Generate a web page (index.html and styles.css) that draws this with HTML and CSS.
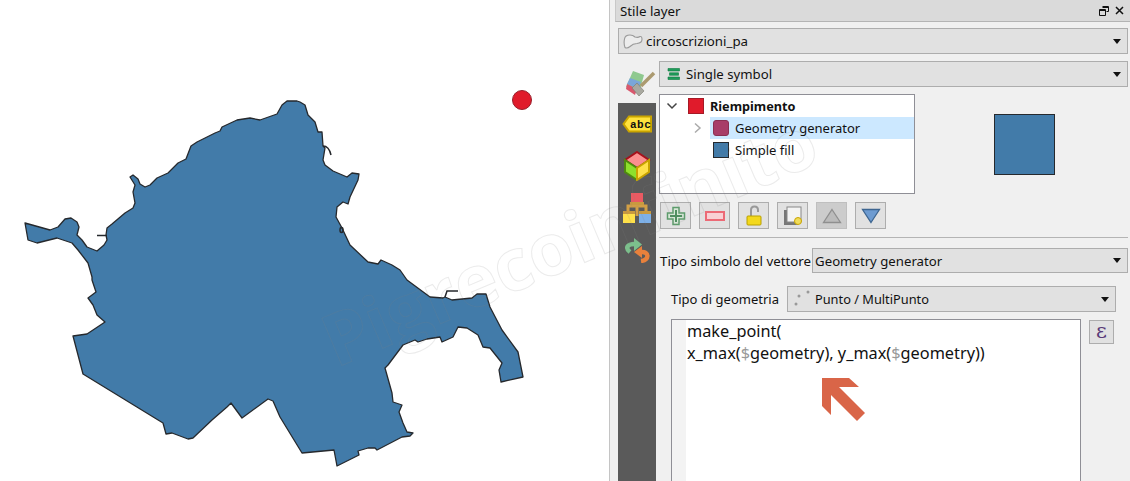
FILE: index.html
```html
<!DOCTYPE html>
<html>
<head>
<meta charset="utf-8">
<title>Stile layer</title>
<link rel="stylesheet" href="styles.css">
</head>
<body>

<div class="map">
    <svg width="609" height="481" viewBox="0 0 609 481">
        <polygon class="area" points="25,223 50,230 58,227 65,219 71,218 77,222 79,227 77,235 82,240 87,247 97,251 104,245 107,240 106,235 107,228 112,224 125,213 133,208 135,203 133,192 135,185 130,177 133,175 138,179 140,184 145,187 150,185 157,178 168,173 178,163 186,159 191,146 197,142 215,133 220,131 222,127 237,120 250,118 260,120 277,114 282,105 287,101 297,101 300,102 305,105 308,115 315,122 318,132 322,132 323,146 325,148 323,160 325,165 333,171 347,177 352,173 359,174 358,180 350,197 348,204 343,202 337,207 336,217 342,228 350,245 368,262 378,264 381,260 392,265 400,270 407,280 430,297 443,298 445,297 452,300 472,298 477,294 486,294 490,307 502,330 518,352 523,377 501,382 499,370 502,363 490,348 483,347 478,335 467,328 458,327 453,337 442,342 440,337 427,339 418,342 415,340 403,345 388,365 385,368 392,393 393,402 402,405 399,412 403,423 407,432 413,433 410,436 402,437 377,450 375,448 368,448 358,451 359,455 337,466 334,450 302,453 280,417 273,401 268,399 242,418 231,403 227,407 212,420 193,438 188,439 172,433 166,434 163,423 83,374 73,336 87,334 105,322 97,315 93,305 88,298 96,292 95,289 92,280 92,277 88,263 78,250 72,243 57,238 37,243 28,240"/>
        <path class="spur" d="M107 235.500H97M323 146q6 0 8 9M445 297l2-6h11"/>
        <ellipse class="spur" cx="341.500" cy="230" rx="1.500" ry="2.500"/>
        <circle class="dot" cx="522" cy="100" r="9.500"/>
    </svg>
</div>

<div class="panel">
    <div class="dock-title">
        <span>Stile layer</span>
        <svg class="dock-btns" width="28" height="12" viewBox="0 0 28 12">
            <path d="M4.500 1.500h6v5h-2M1.500 4.500h6v6h-6zM1.500 5.500h6M4.500 2.500h6" fill="none" stroke="#111"/>
            <path d="M18 2l7 7M25 2l-7 7" stroke="#111" stroke-width="1.500"/>
        </svg>
    </div>

    <div class="combo layer-combo">
        <svg width="20" height="15" viewBox="0 0 20 15">
            <path d="M1.500 5Q2 1 7 1q3 0 5 2 3 1 5-.500 2-.500 2 3t-5 4q-4 0-7 3-3 2.500-5 1-1.500-4-.500-8.500z" fill="#ececec" stroke="#999" stroke-width="1.100"/>
        </svg>
        <span>circoscrizioni_pa</span>
    </div>

    <div class="main">
        <div class="side">
            <svg class="brush" width="32" height="28" viewBox="0 0 32 28">
                <path d="M8 1l11 4-5 18-13-6z" fill="#8fc98f"/>
                <path d="M5 8l11 4-3 7-11-5z" fill="#7aa6d8"/>
                <path d="M2 14l10 5-2 6-9-6z" fill="#d9586e"/>
                <path d="M12 13l7 8-5 5-7-8z" fill="#a9a9a0" stroke="#77776c" stroke-width=".6"/>
                <path d="M16 16L29 3" stroke="#ab9a70" stroke-width="3.500"/>
            </svg>
            <div class="tabs">
                <svg class="tab-label" width="30" height="18" viewBox="0 0 30 18">
                    <path d="M7 1.500h22v15H7L1.500 9z" fill="#ffe23d" stroke="#c9a400" stroke-width="2"/>
                    <text x="8" y="13" class="abc">abc</text>
                </svg>
                <svg class="tab-cube" width="28" height="30" viewBox="0 0 28 30">
                    <path d="M14 1l12 8-12 8-12-8z" fill="#fb8f8f" stroke="#a5121c" stroke-width="2"/>
                    <path d="M2 9l12 8v12L2 21z" fill="#8ee02c" stroke="#4f8a10" stroke-width="2"/>
                    <path d="M26 9l-12 8v12l12-8z" fill="#ffe14a" stroke="#c9a400" stroke-width="2"/>
                </svg>
                <svg class="tab-tree" width="30" height="30" viewBox="0 0 30 30">
                    <path d="M15 9v14M15 13H6v7M15 13h9v7" fill="none" stroke="#d29f45" stroke-width="3"/>
                    <rect x="9" y="0" width="12" height="9" fill="#ea5a62"/>
                    <rect x="8" y="9" width="14" height="3" fill="#c99a3f"/>
                    <rect x="1" y="18" width="12" height="3" fill="#c99a3f"/>
                    <rect x="17" y="18" width="12" height="3" fill="#c99a3f"/>
                    <rect x="1" y="21" width="12" height="9" fill="#ffe14a"/>
                    <rect x="17" y="21" width="12" height="9" fill="#7db0e8"/>
                </svg>
                <svg class="tab-undo" width="26" height="26" viewBox="0 0 26 26">
                    <path d="M6 15C1 11 3 7 11 7" fill="none" stroke="#7cbf8c" stroke-width="4.500"/>
                    <path d="M10 1l8 6.500-8 6.500z" fill="#7cbf8c"/>
                    <path d="M17 15c8-1 9 8 0 9" fill="none" stroke="#e8813c" stroke-width="4.500"/>
                    <path d="M18 9l-8 6 8 6z" fill="#e8813c"/>
                </svg>
            </div>
        </div>

        <div class="content">
            <div class="combo renderer-combo">
                <svg width="14" height="14" viewBox="0 0 14 14">
                    <path d="M1 1.500h11.500v2.500H1zM2.500 5.800h9v2.500h-9zM1 10h11.500v2.500H1z" fill="#1e9c5a" stroke="#0d7a40" stroke-width=".6"/>
                </svg>
                <span>Single symbol</span>
            </div>

            <div class="symbol-row">
                <div class="tree">
                    <div class="tree-row root">
                        <svg class="chev" width="12" height="10" viewBox="0 0 12 10"><path d="M1.500 2.500L6 7l4.500-4.500" fill="none" stroke="#444" stroke-width="1.500"/></svg>
                        <i class="swatch red"></i>
                        <span>Riempimento</span>
                    </div>
                    <div class="tree-row child selected">
                        <svg class="chev-r" width="10" height="12" viewBox="0 0 10 12"><path d="M2 1.500L7 6l-5 4.500" fill="none" stroke="#aaa" stroke-width="1.500"/></svg>
                        <div class="sel">
                            <i class="swatch maroon"></i>
                            <span>Geometry generator</span>
                        </div>
                    </div>
                    <div class="tree-row child">
                        <div class="sel plain">
                            <i class="swatch blue"></i>
                            <span>Simple fill</span>
                        </div>
                    </div>
                </div>
                <div class="preview"></div>
            </div>

            <div class="tool-row">
                <div class="tool">
                    <svg width="20" height="20" viewBox="0 0 20 20"><path d="M7 1.500h6v5.500h5.500v6H13v5.500H7V13H1.500V7H7z" fill="#d8e8d8" stroke="#5d9c6c" stroke-width="1.500"/><path d="M10 4v12M4 10h12" stroke="#4f8f60" stroke-width="2"/></svg>
                </div>
                <div class="tool">
                    <svg width="20" height="10" viewBox="0 0 20 10"><rect x="1" y="1" width="18" height="8" fill="#f9d0d4" stroke="#ec6a76" stroke-width="2"/></svg>
                </div>
                <div class="tool">
                    <svg width="16" height="22" viewBox="0 0 16 22"><path d="M5 11V5q0-3.500 3.500-3.500T12 5v2" fill="none" stroke="#999" stroke-width="2"/><rect x="1" y="11" width="14" height="9" rx="1" fill="#f3d81c" stroke="#b9a000"/></svg>
                </div>
                <div class="tool">
                    <svg width="20" height="20" viewBox="0 0 20 20"><rect x="1" y="4" width="14" height="15" fill="#777"/><rect x="4" y="1" width="14" height="15" fill="#f4f4f4" stroke="#888"/><circle cx="15" cy="15" r="3.500" fill="#f0dc5a" stroke="#c9a400"/></svg>
                </div>
                <div class="tool off">
                    <svg width="20" height="16" viewBox="0 0 20 16"><path d="M10 1.500L18.500 14.500H1.500z" fill="#bbb" stroke="#8f8f8f" stroke-width="1.300"/></svg>
                </div>
                <div class="tool">
                    <svg width="20" height="16" viewBox="0 0 20 16"><path d="M10 14.500L18.500 1.500H1.500z" fill="#6d9bd1" stroke="#3d6590" stroke-width="1.300"/></svg>
                </div>
            </div>

            <div class="rule"></div>

            <div class="type-row">
                <label>Tipo simbolo del vettore</label>
                <div class="combo type-combo"><span>Geometry generator</span></div>
            </div>

            <div class="geom-row">
                <label>Tipo di geometria</label>
                <div class="combo geom-combo">
                    <svg width="20" height="18" viewBox="0 0 20 18">
                        <circle cx="3" cy="14" r="1.500" fill="#999"/><circle cx="6" cy="6" r="1.500" fill="#999"/><circle cx="15" cy="2" r="1.500" fill="#999"/>
                    </svg>
                    <span>Punto / MultiPunto</span>
                </div>
            </div>

            <div class="expr-row">
                <div class="editor">
                    <div class="gutter"></div>
                    <div class="code">
                        <div>make_point(</div>
                        <div>x_max(<span class="var">$</span>geometry), y_max(<span class="var">$</span>geometry))</div>
                    </div>
                </div>
                <div class="eps">ε</div>
            </div>
        </div>
    </div>
</div>

<svg class="arrow" width="46" height="46" viewBox="0 0 46 46">
    <path d="M0 0H27L37 9H17L43 35 35 43 9 17V37L0 28z" fill="#d96548"/>
</svg>

<div class="watermark">Pigrecoinfinito</div>

</body>
</html>
```

FILE: styles.css
```css
html, body {
    margin: 0;
    height: 481px;
    overflow: hidden;
}
body {
    display: flex;
    position: relative;
    background: #fff;
    font-family: "Noto Sans", Arial, sans-serif;
    font-size: 13px;
    color: #111;
}
svg {
    display: block;
    flex: none;
}

/* map canvas */
.map {
    width: 609px;
    flex: none;
}
.area {
    fill: #427ba9;
    stroke: #26292d;
    stroke-width: 1.3;
    stroke-linejoin: round;
}
.spur {
    fill: none;
    stroke: #26292d;
    stroke-width: 1.5;
}
.dot {
    fill: #e01b2b;
    stroke: #97202c;
    stroke-width: 1;
}

/* dock panel */
.panel {
    width: 520px;
    height: 481px;
    flex: none;
    background: #f0f0f0;
    border-left: 1px solid #c4c4c4;
}
.dock-title {
    display: flex;
    align-items: center;
    justify-content: space-between;
    height: 22px;
    margin-left: 5px;
    padding: 0 4px 0 4px;
    background: #dadada;
    border-bottom: 1px solid #b4b4b4;
    border-left: 1px solid #c8c8c8;
    box-sizing: border-box;
    font-size: 13.300px;
}
.combo {
    display: flex;
    align-items: center;
    gap: 3px;
    box-sizing: border-box;
    background: #e1e1e1;
    border: 1px solid #adadad;
    padding: 0 6px 0 4px;
}
.combo::after {
    content: "";
    margin-left: auto;
    border-top: 5px solid #111;
    border-left: 4px solid transparent;
    border-right: 4px solid transparent;
}
.layer-combo {
    height: 26px;
    margin: 6px 2px 0 8px;
    font-size: 13.300px;
}
.main {
    display: flex;
    height: 420px;
    margin: 7px 2px 0 8px;
}
.side {
    width: 38px;
    margin-right: 3px;
    flex: none;
}
.brush {
    margin: 9px 0 5px 7px;
}
.tabs {
    display: flex;
    flex-direction: column;
    align-items: center;
    height: 378px;
    padding-top: 12px;
    box-sizing: border-box;
    background: #5a5a5a;
}
.abc {
    font-family: "Liberation Mono", monospace;
    font-size: 11px;
    font-weight: bold;
    letter-spacing: .5px;
    fill: #111;
}
.tab-cube {
    margin-top: 18px;
}
.tab-tree {
    margin-top: 12px;
}
.tab-undo {
    margin-top: 14px;
}
.content {
    flex: 1;
    min-width: 0;
}
.renderer-combo {
    height: 26px;
    padding-left: 7px;
    gap: 5px;
    font-size: 13.200px;
}

/* symbol tree */
.symbol-row {
    display: flex;
    align-items: center;
    margin-top: 7px;
}
.tree {
    width: 256px;
    height: 100px;
    box-sizing: border-box;
    background: #fff;
    border: 1px solid #8f8f96;
    flex: none;
}
.tree-row {
    display: flex;
    align-items: center;
    height: 22px;
}
.root {
    font-weight: bold;
    font-size: 12.700px;
    padding-left: 6px;
}
.chev {
    margin-right: 10px;
}
.swatch {
    display: block;
    width: 16px;
    height: 16px;
    margin-right: 6px;
    box-sizing: border-box;
    flex: none;
}
.red {
    background: #e01b2b;
    border: 1px solid #a51a26;
}
.maroon {
    background: #a83d68;
    border: 1px solid #8a3052;
    border-radius: 3px;
}
.blue {
    background: #427ba9;
    border: 1px solid #26292d;
}
.chev-r {
    margin: 0 7px 0 33px;
}
.sel {
    display: flex;
    align-items: center;
    height: 22px;
    flex: 1;
    padding-left: 3px;
    background: #cce8ff;
}
.sel.plain {
    background: none;
    margin-left: 50px;
}
.preview {
    width: 61px;
    height: 61px;
    margin-left: 79px;
    box-sizing: border-box;
    background: #427ba9;
    border: 1px solid #26292d;
}

/* symbol buttons */
.tool-row {
    display: flex;
    gap: 8px;
    margin: 8px 0 0 1px;
}
.tool {
    display: flex;
    align-items: center;
    justify-content: center;
    width: 31px;
    height: 27px;
    box-sizing: border-box;
    background: #e1e1e1;
    border: 1px solid #adadad;
}
.tool.off {
    background: #cccccc;
    border-color: #bfbfbf;
}
.rule {
    height: 1px;
    margin-top: 8px;
    background: #b4b4b4;
}
.type-row {
    display: flex;
    align-items: center;
    margin-top: 10px;
    padding-left: 1px;
}
.type-row label {
    font-size: 13.300px;
    margin-right: 1px;
}
.type-combo {
    flex: 1;
    height: 25px;
    padding-left: 2px;
    font-size: 13.200px;
}
.geom-row {
    display: flex;
    align-items: center;
    margin: 13px 12px 0 12px;
}
.geom-row label {
    margin-right: 8px;
}
.geom-combo {
    flex: 1;
    height: 26px;
    padding-left: 5px;
    gap: 2px;
    font-size: 12.800px;
}

/* expression editor */
.expr-row {
    display: flex;
    align-items: flex-start;
    gap: 8px;
    margin: 7px 14px 0 12px;
}
.editor {
    display: flex;
    flex: 1;
    height: 162px;
    box-sizing: border-box;
    background: #fff;
    border: 1px solid #8f8f96;
    border-bottom: 0;
}
.gutter {
    width: 14px;
    background: #f3f3f3;
}
.code {
    padding: 0 0 0 1px;
    font-size: 16.300px;
    line-height: 22px;
}
.var {
    color: #999;
}
.eps {
    width: 25px;
    height: 24px;
    margin-top: 1px;
    box-sizing: border-box;
    text-align: center;
    font-family: "DejaVu Serif", serif;
    font-size: 21px;
    line-height: 20px;
    color: #5a3a78;
    background: #e1e1e1;
    border: 1px solid #adadad;
}

/* overlays */
.arrow {
    position: absolute;
    left: 822px;
    top: 378px;
}
.watermark {
    position: absolute;
    left: 304px;
    top: 190px;
    font-family: "Open Sans", sans-serif;
    font-size: 72px;
    font-weight: 700;
    white-space: nowrap;
    color: transparent;
    -webkit-text-stroke: 1px rgba(130, 130, 130, 0.16);
    transform: rotate(-23deg);
    pointer-events: none;
}
```
